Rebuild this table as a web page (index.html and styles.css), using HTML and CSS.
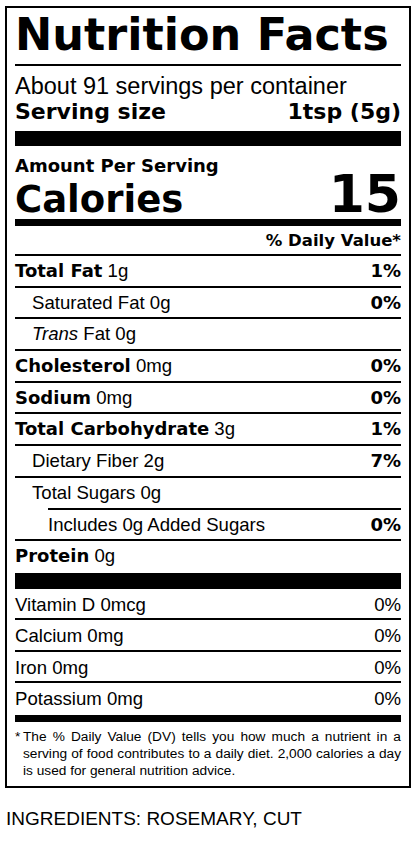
FILE: index.html
```html
<!DOCTYPE html>
<html lang="en">
<head>
    <meta charset="UTF-8">
    <meta name="viewport" content="width=device-width, initial-scale=1.0">
    <title>Nutrition Facts</title>
    <link rel="stylesheet" href="styles.css">
</head>
<body>
    <div class="label">
        <h1 class="title">Nutrition Facts</h1>
        <div class="servings">About 91 servings per container</div>
        <div class="serving-size"><span>Serving size</span><span>1tsp (5g)</span></div>
        <div class="bar bar-thick"></div>

        <div class="amount">Amount Per Serving</div>
        <div class="calories"><span class="cal-label">Calories</span><span class="cal-value">15</span></div>
        <div class="bar bar-medium"></div>

        <div class="dv-head">% Daily Value*</div>
        <div class="row"><span><b>Total Fat</b> 1g</span><b>1%</b></div>
        <div class="row indent"><span>Saturated Fat 0g</span><b>0%</b></div>
        <div class="row indent"><span><i>Trans</i> Fat 0g</span></div>
        <div class="row"><span><b>Cholesterol</b> 0mg</span><b>0%</b></div>
        <div class="row"><span><b>Sodium</b> 0mg</span><b>0%</b></div>
        <div class="row"><span><b>Total Carbohydrate</b> 3g</span><b>1%</b></div>
        <div class="row indent"><span>Dietary Fiber 2g</span><b>7%</b></div>
        <div class="row indent no-line"><span>Total Sugars 0g</span></div>
        <div class="row-added">
            <div class="added-inner"><span>Includes 0g Added Sugars</span><b>0%</b></div>
        </div>
        <div class="row protein"><span><b>Protein</b> 0g</span></div>
        <div class="bar bar-protein"></div>

        <!-- vitamins and minerals -->
        <div class="row vit"><span>Vitamin D 0mcg</span><span>0%</span></div>
        <div class="row vit"><span>Calcium 0mg</span><span>0%</span></div>
        <div class="row vit"><span>Iron 0mg</span><span>0%</span></div>
        <div class="row vit last"><span>Potassium 0mg</span><span>0%</span></div>
        <div class="bar bar-medium bar-foot"></div>

        <p class="footnote"><span class="ast">*</span>The % Daily Value (DV) tells you how much a nutrient in a serving of food contributes to a daily diet. 2,000 calories a day is used for general nutrition advice.</p>
    </div>

    <p class="ingredients">INGREDIENTS: ROSEMARY, CUT</p>
</body>
</html>
```

FILE: styles.css
```css
body { margin: 0; font-family: "Liberation Sans", Arial, sans-serif; color: #000; background: #fff; }
b, .title, .serving-size, .amount, .calories, .dv-head { font-family: "DejaVu Sans", sans-serif; font-weight: bold; }
b { font-size: 18px; }

.label { width: 406px; margin: 6px 0 0 5px; padding: 0 8px 7px; border: 2px solid #000; box-sizing: border-box; }
.title { margin: 0; padding: 1px 0 3px; font-size: 44.5px; line-height: 52px; white-space: nowrap; border-bottom: 2px solid #000; }
.servings { padding-top: 7px; font-size: 23.5px; line-height: 26px; white-space: nowrap; }
.serving-size { display: flex; justify-content: space-between; font-size: 22px; line-height: 26px; }

.bar { background: #000; }
.bar-thick { margin-top: 6px; height: 15px; }
.bar-medium { margin-top: 1px; height: 7px; }
.bar-protein { height: 16px; }
.bar-foot { margin-top: 0; }

.amount { margin-top: 10px; font-size: 18px; line-height: 20px; }
.calories { display: flex; justify-content: space-between; align-items: baseline; margin-top: -2px; height: 44px; line-height: 40px; }
.cal-label { font-size: 37px; }
.cal-value { font-size: 52px; }

.dv-head { padding-top: 2px; text-align: right; font-size: 16.5px; line-height: 26px; border-bottom: 2px solid #000; }

.row { display: flex; justify-content: space-between; align-items: baseline; height: 29.7px; font-size: 18.6px; line-height: 29.7px; border-bottom: 2px solid #000; }
.row.indent { padding-left: 17px; }
.row.no-line { border-bottom: none; }
.row-added { border-bottom: 2px solid #000; }
.added-inner { display: flex; justify-content: space-between; align-items: baseline; margin-left: 33px; height: 29.7px; font-size: 18.6px; line-height: 29.7px; border-top: 2px solid #000; }
.row.protein { height: 31.7px; border-bottom: none; }
.row.vit { height: 29.5px; line-height: 31px; }
.row.vit.last { height: 31.5px; border-bottom: none; }

.footnote { margin: 0; padding: 6px 0 0 8px; text-indent: -8px; font-size: 13.7px; line-height: 17px; text-align: justify; }
.ast { display: inline-block; width: 8px; text-indent: 0; }

.ingredients { margin: 20px 0 0 6px; font-size: 19px; line-height: 22px; }
```
